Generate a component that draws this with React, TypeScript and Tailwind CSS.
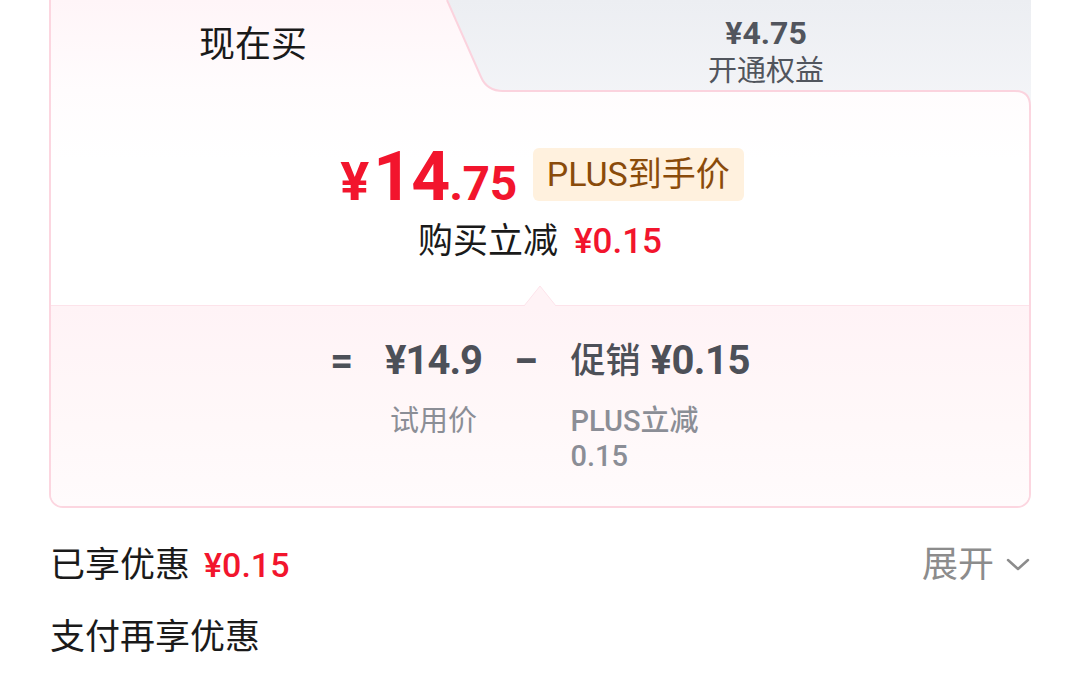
import React from 'react';

const RED = 'text-[#f2152d]';

const TabShape = () => (
  <svg
    className="absolute top-0 left-0 z-10 overflow-visible"
    width={584}
    height={110}
    viewBox="0 0 584 110"
  >
    <defs>
      <linearGradient id="tabGrey" x1="0" y1="0" x2="0" y2="1">
        <stop offset="0%" stopColor="#eceef2" />
        <stop offset="100%" stopColor="#f4f5f8" />
      </linearGradient>
    </defs>
    <path
      d="M0 0 L34 77 Q40 91 56 91 L568 91 Q583 91 583 106 L583 110 L584 110 L584 0 Z"
      fill="url(#tabGrey)"
    />
    <path
      d="M0 0 L34 77 Q40 91 56 91 L568 91 Q583 91 583 106 L583 110"
      fill="none"
      stroke="#fbd3de"
      strokeWidth={2}
    />
  </svg>
);

const App = () => {
  return (
    <div
      className="w-[1080px] h-[683px] overflow-hidden bg-white"
      style={{ fontFamily: 'Roboto, "Noto Sans CJK SC", sans-serif' }}
    >
      {/* price card */}
      <div className="ml-[49px] w-[982px] border-x-2 border-b-2 border-[#fcd6e0] rounded-b-[14px] bg-[linear-gradient(180deg,#fff5f8_0px,#fffcfd_90px,#ffffff_160px)]">
        {/* tabs */}
        <div className="flex h-[91px]">
          <div className="flex-1 flex items-center justify-center pl-[8px] pb-[2px]">
            <span className="text-[36px] leading-none text-[#1a1a1a]">现在买</span>
          </div>
          <div className="relative w-[582px] h-full">
            <TabShape />
            <div className="relative z-20 h-full flex flex-col items-center justify-center pl-[56px] pt-[12px] text-[#51555d]">
              <span className="text-[32px] leading-[38px] font-bold">¥4.75</span>
              <span className="text-[29px] leading-[38px]">开通权益</span>
            </div>
          </div>
        </div>

        {/* current price */}
        <div className="h-[214px] flex flex-col items-center">
          <div className="mt-[57px] h-[53px] flex items-center gap-[16px] translate-x-[2px]">
            <div className={`flex items-baseline font-bold leading-none ${RED} translate-y-[2px]`}>
              <span className="text-[54px]">¥</span>
              <span className="text-[68px] ml-[4px] tracking-[-1px]">14</span>
              <span className="text-[48px] tracking-[-0.5px]">.75</span>
            </div>
            <div className="h-[53px] px-[14px] rounded-[6px] bg-[#fff1de] flex items-center text-[34px] text-[#8a4b0a]">
              PLUS到手价
            </div>
          </div>
          <div className="mt-[22px] h-[36px] flex items-center gap-[16px] text-[35px] leading-none">
            <span className="text-[#1a1a1a]">购买立减</span>
            <span className={`${RED} font-medium`}>¥0.15</span>
          </div>
        </div>

        {/* breakdown */}
        <div className="relative h-[201px] border-t border-[#fde3ea] rounded-b-[12px] bg-[linear-gradient(180deg,#fff3f6_0%,#fff8f9_60%,#fffbfc_100%)]">
          <svg
            className="absolute left-1/2 -translate-x-1/2 -top-[21px]"
            width={32}
            height={22}
            viewBox="0 0 32 22"
          >
            <path d="M0 21 L16 1 L32 21 Z" fill="#fff3f6" />
            <path d="M0 21 L16 1 L32 21" fill="none" stroke="#fde3ea" strokeWidth={1} />
            <path d="M1 21.5 L31 21.5" stroke="#fff3f6" strokeWidth={1.5} />
          </svg>
          <div className="grid grid-cols-[auto_auto_auto_auto] justify-center gap-x-[32px] pt-[33px] text-[#4d5058]">
            <span className="h-[44px] flex items-center text-[40px] font-bold leading-none">=</span>
            <span className="h-[44px] flex items-center text-[40px] font-bold leading-none tracking-[-1px]">¥14.9</span>
            <span className="h-[44px] flex items-center text-[44px] font-bold leading-none">−</span>
            <span className="h-[44px] flex items-center gap-[10px] leading-none">
              <span className="text-[35px] font-medium">促销</span>
              <span className="text-[40px] font-bold tracking-[-0.5px]">¥0.15</span>
            </span>
            <span />
            <span className="mt-[21px] text-center text-[29px] leading-[35px] text-[#8b8e96]">试用价</span>
            <span />
            <span className="mt-[21px] text-[29px] leading-[35px] text-[#8b8e96] font-medium">
              PLUS立减
              <br />
              0.15
            </span>
          </div>
        </div>
      </div>

      {/* discounts */}
      <div className="mx-[50px] mt-[35px] h-[44px] flex items-center justify-between">
        <div className="flex items-center gap-[14px] text-[35px] leading-none">
          <span className="text-[#1a1a1a]">已享优惠</span>
          <span className={`${RED} font-medium text-[34px]`}>¥0.15</span>
        </div>
        <div className="flex items-center gap-[12px] text-[#8c8c8c]">
          <span className="text-[36px] leading-none">展开</span>
          <svg width={24} height={14} viewBox="0 0 24 14">
            <polyline
              points="2,2 12,11 22,2"
              fill="none"
              stroke="#8c8c8c"
              strokeWidth={2.5}
              strokeLinecap="round"
              strokeLinejoin="round"
            />
          </svg>
        </div>
      </div>
      <div className="mx-[50px] mt-[28px] h-[44px] flex items-center text-[35px] leading-none text-[#1a1a1a]">
        支付再享优惠
      </div>
    </div>
  );
};

export default App;
